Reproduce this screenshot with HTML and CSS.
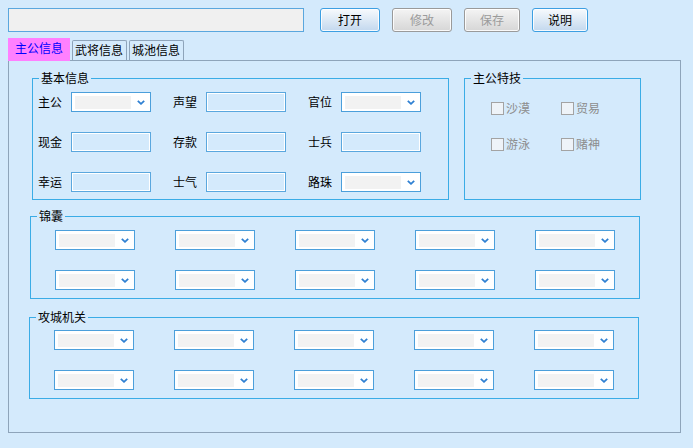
FILE: index.html
```html
<!DOCTYPE html>
<html lang="zh-CN">

<head>
  <meta charset="UTF-8">
  <title>主公信息</title>
  <link rel="stylesheet" href="styles.css">
</head>

<body>
  <div class="window">
    <div class="toolbar">
      <input class="path" type="text">
      <div class="actions">
        <button class="btn">打开</button>
        <button class="btn" disabled>修改</button>
        <button class="btn narrow" disabled>保存</button>
        <button class="btn narrow">说明</button>
      </div>
    </div>

    <div class="tabs">
      <span class="tab active">主公信息</span>
      <span class="tab">武将信息</span>
      <span class="tab">城池信息</span>
    </div>

    <div class="panel">
      <div class="top-row">
        <fieldset class="group basic">
          <legend>基本信息</legend>
          <div class="fields">
            <div class="field"><label>主公</label><div class="combo"><span class="combo-text"></span><svg viewBox="0 0 8 5"><path d="M0.8 0.8 L4 3.8 L7.2 0.8"/></svg></div></div>
            <div class="field"><label>声望</label><input class="box" type="text"></div>
            <div class="field"><label>官位</label><div class="combo"><span class="combo-text"></span><svg viewBox="0 0 8 5"><path d="M0.8 0.8 L4 3.8 L7.2 0.8"/></svg></div></div>
            <div class="field"><label>现金</label><input class="box" type="text"></div>
            <div class="field"><label>存款</label><input class="box" type="text"></div>
            <div class="field"><label>士兵</label><input class="box" type="text"></div>
            <div class="field"><label>幸运</label><input class="box" type="text"></div>
            <div class="field"><label>士气</label><input class="box" type="text"></div>
            <div class="field"><label>路珠</label><div class="combo"><span class="combo-text"></span><svg viewBox="0 0 8 5"><path d="M0.8 0.8 L4 3.8 L7.2 0.8"/></svg></div></div>
          </div>
        </fieldset>

        <fieldset class="group skills">
          <legend>主公特技</legend>
          <div class="checks">
            <label class="check"><input type="checkbox" disabled>沙漠</label>
            <label class="check"><input type="checkbox" disabled>贸易</label>
            <label class="check"><input type="checkbox" disabled>游泳</label>
            <label class="check"><input type="checkbox" disabled>赌神</label>
          </div>
        </fieldset>
      </div>

      <fieldset class="group bag">
        <legend>锦囊</legend>
        <div class="combo-grid">
          <div class="combo"><span class="combo-text"></span><svg viewBox="0 0 8 5"><path d="M0.8 0.8 L4 3.8 L7.2 0.8"/></svg></div>
          <div class="combo"><span class="combo-text"></span><svg viewBox="0 0 8 5"><path d="M0.8 0.8 L4 3.8 L7.2 0.8"/></svg></div>
          <div class="combo"><span class="combo-text"></span><svg viewBox="0 0 8 5"><path d="M0.8 0.8 L4 3.8 L7.2 0.8"/></svg></div>
          <div class="combo"><span class="combo-text"></span><svg viewBox="0 0 8 5"><path d="M0.8 0.8 L4 3.8 L7.2 0.8"/></svg></div>
          <div class="combo"><span class="combo-text"></span><svg viewBox="0 0 8 5"><path d="M0.8 0.8 L4 3.8 L7.2 0.8"/></svg></div>
          <div class="combo"><span class="combo-text"></span><svg viewBox="0 0 8 5"><path d="M0.8 0.8 L4 3.8 L7.2 0.8"/></svg></div>
          <div class="combo"><span class="combo-text"></span><svg viewBox="0 0 8 5"><path d="M0.8 0.8 L4 3.8 L7.2 0.8"/></svg></div>
          <div class="combo"><span class="combo-text"></span><svg viewBox="0 0 8 5"><path d="M0.8 0.8 L4 3.8 L7.2 0.8"/></svg></div>
          <div class="combo"><span class="combo-text"></span><svg viewBox="0 0 8 5"><path d="M0.8 0.8 L4 3.8 L7.2 0.8"/></svg></div>
          <div class="combo"><span class="combo-text"></span><svg viewBox="0 0 8 5"><path d="M0.8 0.8 L4 3.8 L7.2 0.8"/></svg></div>
        </div>
      </fieldset>

      <fieldset class="group siege">
        <legend>攻城机关</legend>
        <div class="combo-grid">
          <div class="combo"><span class="combo-text"></span><svg viewBox="0 0 8 5"><path d="M0.8 0.8 L4 3.8 L7.2 0.8"/></svg></div>
          <div class="combo"><span class="combo-text"></span><svg viewBox="0 0 8 5"><path d="M0.8 0.8 L4 3.8 L7.2 0.8"/></svg></div>
          <div class="combo"><span class="combo-text"></span><svg viewBox="0 0 8 5"><path d="M0.8 0.8 L4 3.8 L7.2 0.8"/></svg></div>
          <div class="combo"><span class="combo-text"></span><svg viewBox="0 0 8 5"><path d="M0.8 0.8 L4 3.8 L7.2 0.8"/></svg></div>
          <div class="combo"><span class="combo-text"></span><svg viewBox="0 0 8 5"><path d="M0.8 0.8 L4 3.8 L7.2 0.8"/></svg></div>
          <div class="combo"><span class="combo-text"></span><svg viewBox="0 0 8 5"><path d="M0.8 0.8 L4 3.8 L7.2 0.8"/></svg></div>
          <div class="combo"><span class="combo-text"></span><svg viewBox="0 0 8 5"><path d="M0.8 0.8 L4 3.8 L7.2 0.8"/></svg></div>
          <div class="combo"><span class="combo-text"></span><svg viewBox="0 0 8 5"><path d="M0.8 0.8 L4 3.8 L7.2 0.8"/></svg></div>
          <div class="combo"><span class="combo-text"></span><svg viewBox="0 0 8 5"><path d="M0.8 0.8 L4 3.8 L7.2 0.8"/></svg></div>
          <div class="combo"><span class="combo-text"></span><svg viewBox="0 0 8 5"><path d="M0.8 0.8 L4 3.8 L7.2 0.8"/></svg></div>
        </div>
      </fieldset>
    </div>
  </div>
</body>

</html>
```

FILE: styles.css
```css
* {
  margin: 0;
  box-sizing: border-box;
}

body {
  font-family: "Noto Sans CJK SC", "Noto Sans", sans-serif;
  font-size: 12px;
  line-height: 14px;
  background: #d4eafc;
  color: #000;
}

.window {
  padding: 8px;
}

.toolbar {
  display: flex;
  height: 24px;
}

.path {
  width: 296px;
  height: 24px;
  margin-right: 16px;
  border: 1px solid #5aa7de;
  background: #f0f0f0;
  font: inherit;
}

.actions {
  display: flex;
  gap: 12px;
}

.btn {
  width: 60px;
  height: 24px;
  padding: 0;
  border: 1px solid #3d9fe2;
  border-radius: 3px;
  background: linear-gradient(#f7fafd, #c3d8ee);
  box-shadow: inset 0 0 0 1px rgba(255, 255, 255, 0.85);
  font: inherit;
  color: #000;
}

.btn.narrow {
  width: 56px;
}

.btn:disabled {
  border-color: #9a9a9a;
  background: linear-gradient(#f4f4f4, #d6d6d6);
  color: #9b9b9b;
}

.tabs {
  display: flex;
  align-items: flex-end;
  height: 22px;
  margin-top: 6px;
}

.tab {
  height: 20px;
  padding: 2px 3px 0 2px;
  border: 1px solid #8ea4ba;
  border-bottom: none;
  border-radius: 2px 2px 0 0;
}

.tab + .tab {
  margin-left: 2px;
}

.tab.active {
  height: 23px;
  margin-bottom: -1px;
  padding: 3px 7px 0 7px;
  border: none;
  border-radius: 0;
  background: #ff80ff;
  color: #0000ff;
  position: relative;
}

.panel {
  width: 673px;
  height: 373px;
  padding-top: 10px;
  border: 1px solid #8ea4ba;
  display: flex;
  flex-direction: column;
}

.top-row {
  display: flex;
  gap: 15px;
  margin-left: 23px;
}

.group {
  border: 1px solid #3aace6;
  padding: 0;
  min-width: 0;
}

.group legend {
  padding: 0 2px;
  line-height: 14px;
}

.basic {
  width: 417px;
  padding: 7px 5px 7px 5px;
}

.basic legend {
  margin-left: 1px;
}

.fields {
  display: grid;
  grid-template-columns: 135px 135px 135px;
  row-gap: 20px;
}

.field {
  display: flex;
  align-items: center;
  height: 20px;
}

.field label {
  width: 33px;
}

.box {
  width: 80px;
  height: 20px;
  border: 1px solid #5aa7de;
  box-shadow: inset 0 0 0 1px #fff;
  background: #d4eafc;
  font: inherit;
}

.combo {
  width: 80px;
  height: 20px;
  border: 1px solid #4b9fdb;
  background: #fff;
  display: flex;
  align-items: center;
  padding: 0 5px 0 3px;
}

.combo-text {
  width: 56px;
  height: 13px;
  background: #f2f2f2;
}

.combo svg {
  width: 8px;
  height: 5px;
  margin-left: auto;
  fill: none;
  stroke: #2f80d2;
  stroke-width: 1.8;
}

.skills {
  width: 177px;
  padding: 15px 0 0 26px;
}

.skills legend {
  margin-left: -20px;
}

.checks {
  display: grid;
  grid-template-columns: 70px 70px;
  row-gap: 20px;
}

.check {
  display: flex;
  align-items: center;
  height: 16px;
  color: #8d8d8d;
}

.check input {
  appearance: none;
  width: 13px;
  height: 13px;
  margin: 0 2px 0 0;
  border: 1px solid #a3a3a3;
  background: #eef3f8;
}

.bag {
  width: 610px;
  margin: 9px 0 0 21px;
  padding: 7px 0 8px 24px;
}

.bag legend {
  margin-left: -18px;
}

.siege {
  width: 610px;
  margin: 11px 0 0 20px;
  padding: 6px 0 8px 24px;
}

.siege legend {
  margin-left: -18px;
}

.combo-grid {
  display: grid;
  grid-template-columns: repeat(5, 80px);
  column-gap: 40px;
  row-gap: 20px;
}
```
